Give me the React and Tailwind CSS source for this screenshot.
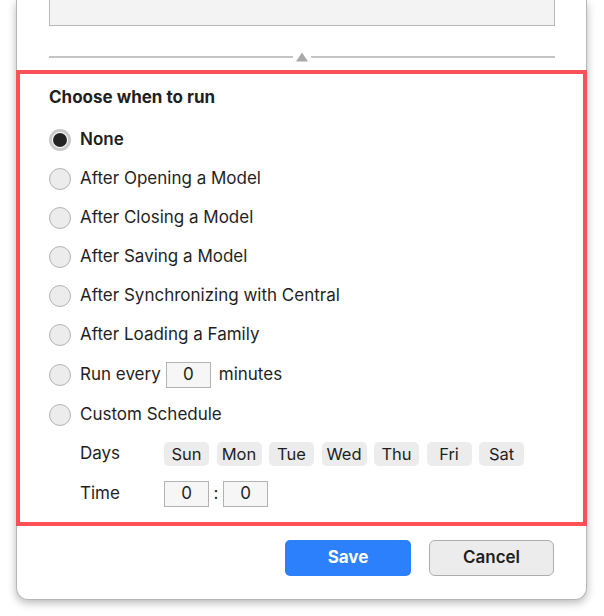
import React from 'react'

const font = { fontFamily: 'Inter, "Noto Sans", sans-serif' }

// Single radio choice row
function Radio({ checked, children, rowClass = 'h-[39px]' }) {
  return (
    <div className={`flex items-center ${rowClass}`}>
      <div
        className={
          checked
            ? 'w-[22px] h-[22px] rounded-full border-[3px] border-[#c9c9c9] bg-white flex items-center justify-center'
            : 'w-[22px] h-[22px] rounded-full border border-[#b3b3b3] bg-[#ececec]'
        }
      >
        {checked && <div className="w-[14px] h-[14px] rounded-full bg-[#232323]" />}
      </div>
      <div className={`ml-[9px] flex items-center text-[17px] text-[#1f1f1f] ${checked ? 'font-semibold' : ''}`}>
        {children}
      </div>
    </div>
  )
}

function NumBox({ value }) {
  return (
    <div className="w-[45px] h-[26px] border border-[#b3b3b3] bg-[#f6f6f6] flex items-center justify-center text-[17px] text-[#1f1f1f]">
      {value}
    </div>
  )
}

const days = ['Sun', 'Mon', 'Tue', 'Wed', 'Thu', 'Fri', 'Sat']

const options = [
  'After Opening a Model',
  'After Closing a Model',
  'After Saving a Model',
  'After Synchronizing with Central',
  'After Loading a Family',
]

export default function App() {
  return (
    <div className="w-[604px] h-[616px] bg-white overflow-hidden pl-[16px]" style={font}>
      <div className="w-[571px] bg-white border-x border-b border-[#b7b7b7] rounded-b-[12px] shadow-[0_3px_8px_rgba(0,0,0,0.28)]">
        <div className="pl-[32px] pr-[31px]">
          {/* Tail of the script text area */}
          <div className="h-[26px] bg-[#f3f3f3] border-x border-b border-[#b8b8b8]" />

          {/* Splitter with grip arrow */}
          <div className="mt-[25px] h-[12px] flex items-center">
            <div className="flex-1 h-[2px] bg-[#c4c4c4]" />
            <svg width="18" height="10" viewBox="0 0 18 10">
              <polygon points="9,0.5 15,9.5 3,9.5" fill="#a9a9a9" />
            </svg>
            <div className="flex-1 h-[2px] bg-[#c4c4c4]" />
          </div>
        </div>

        {/* Highlighted run options */}
        <div className="-mx-px mt-[7px] border-4 border-[#fd5158] pl-[29px] pt-[14px] pb-[8px]">
          <div className="h-[20px] flex items-center text-[17px] font-bold text-[#1f1f1f]">
            Choose when to run
          </div>
          <div className="mt-[12px] flex flex-col">
            <Radio checked>None</Radio>
            {options.map((o) => (
              <Radio key={o}>{o}</Radio>
            ))}
            <Radio rowClass="h-[42px]">
              <span>Run every</span>
              <span className="ml-[5px]"><NumBox value="0" /></span>
              <span className="ml-[8px]">minutes</span>
            </Radio>
            <Radio rowClass="h-[38px]">Custom Schedule</Radio>
            <div className="h-[40px] flex items-center pl-[31px]">
              <div className="w-[84px] text-[17px] text-[#1f1f1f]">Days</div>
              <div className="flex gap-[7.5px]">
                {days.map((d) => (
                  <div
                    key={d}
                    className="w-[45px] h-[24px] rounded-[5px] bg-[#ececec] flex items-center justify-center text-[16.5px] text-[#1f1f1f]"
                  >
                    {d}
                  </div>
                ))}
              </div>
            </div>
            <div className="h-[40px] flex items-center pl-[31px]">
              <div className="w-[84px] text-[17px] text-[#1f1f1f]">Time</div>
              <NumBox value="0" />
              <div className="w-[14px] text-center text-[17px] text-[#1f1f1f]">:</div>
              <NumBox value="0" />
            </div>
          </div>
        </div>

        {/* Dialog buttons */}
        <div className="mt-[14px] pb-[23px] pr-[32px] flex justify-end gap-[18px]">
          <button className="w-[126px] h-[36px] rounded-[5px] bg-[#2c80fb] text-white text-[17px] font-bold">
            Save
          </button>
          <button className="w-[125px] h-[36px] rounded-[6px] border border-[#adadad] bg-[#ececec] text-[#1f1f1f] text-[17px] font-semibold">
            Cancel
          </button>
        </div>
      </div>
    </div>
  )
}
